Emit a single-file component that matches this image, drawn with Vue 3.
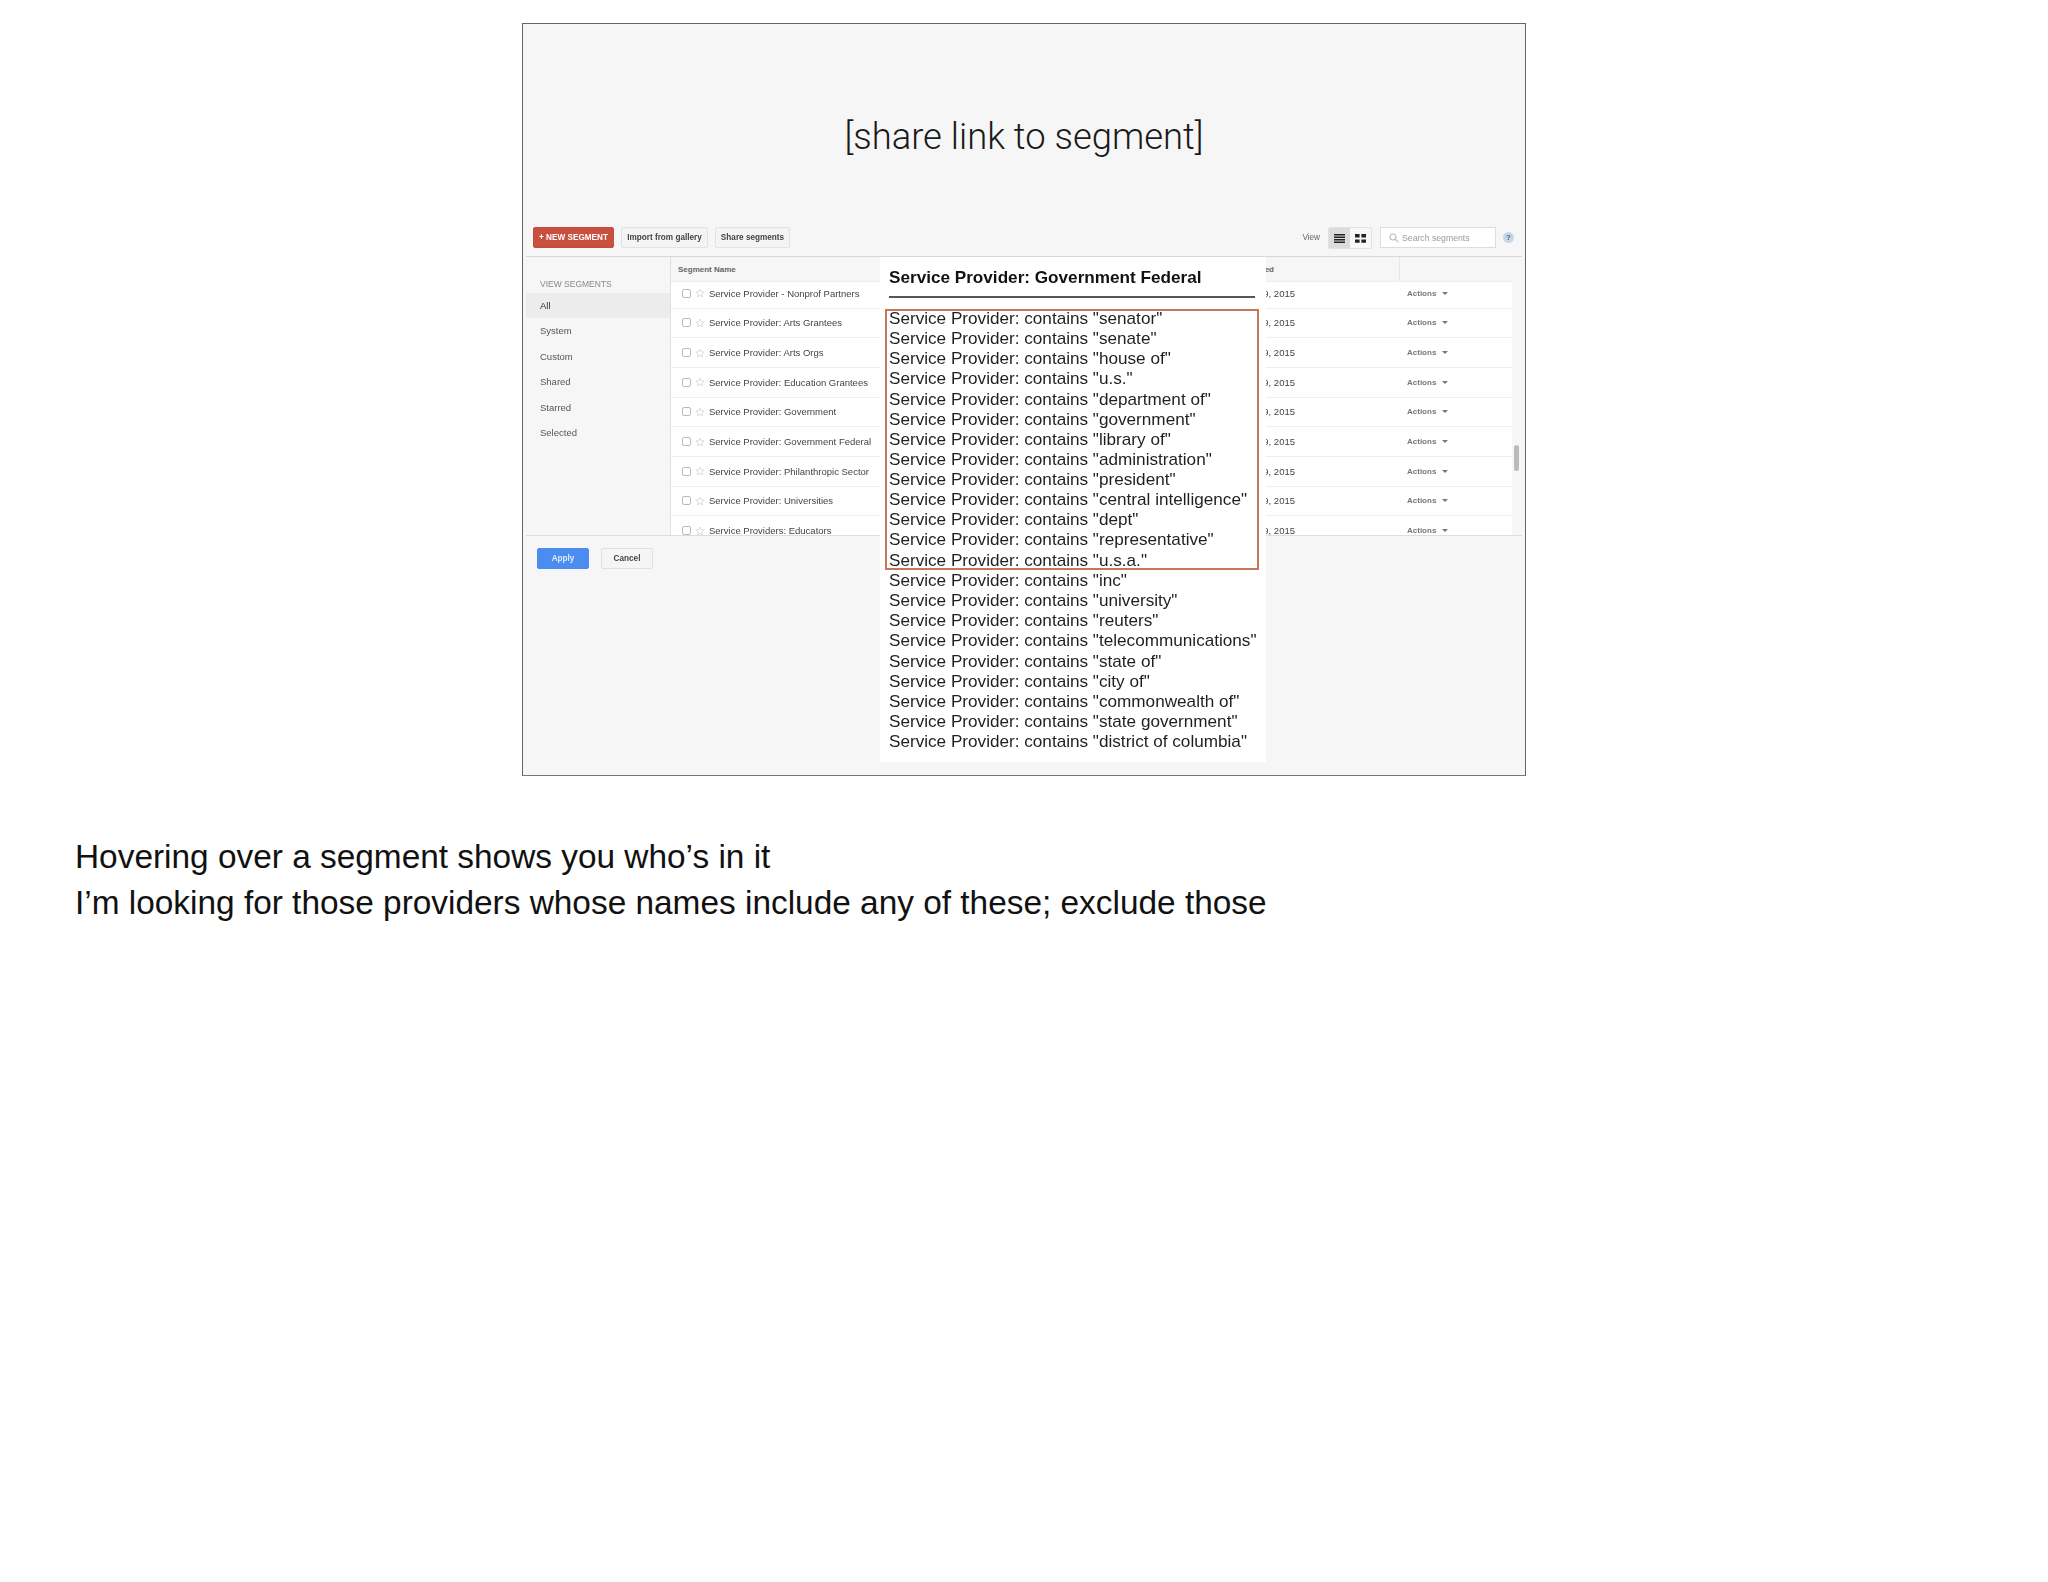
<script setup>
const sideItems = ['All', 'System', 'Custom', 'Shared', 'Starred', 'Selected']

const segments = [
  'Service Provider - Nonprof Partners',
  'Service Provider: Arts Grantees',
  'Service Provider: Arts Orgs',
  'Service Provider: Education Grantees',
  'Service Provider: Government',
  'Service Provider: Government Federal',
  'Service Provider: Philanthropic Sector',
  'Service Provider: Universities',
  'Service Providers: Educators'
]

const boxedTerms = [
  'senator', 'senate', 'house of', 'u.s.', 'department of', 'government', 'library of',
  'administration', 'president', 'central intelligence', 'dept', 'representative', 'u.s.a.'
]

const otherTerms = [
  'inc', 'university', 'reuters', 'telecommunications', 'state of', 'city of',
  'commonwealth of', 'state government', 'district of columbia'
]
</script>

<template>
  <div class="page">
    <div class="slide">
      <h1 class="slide-title">[share link to segment]</h1>

      <div class="shot">
        <div class="toolbar">
          <button class="btn btn-red">+ NEW SEGMENT</button>
          <button class="btn btn-plain">Import from gallery</button>
          <button class="btn btn-plain">Share segments</button>
          <span class="view-label">View</span>
          <div class="view-toggle">
            <span class="toggle-part active">
              <svg width="11" height="9" viewBox="0 0 11 9"><path d="M0 0h11v1.4H0zM0 2.5h11v1.4H0zM0 5h11v1.4H0zM0 7.5h11v1.4H0z" fill="#222" /></svg>
            </span>
            <span class="toggle-part">
              <svg width="11" height="9" viewBox="0 0 11 9"><path d="M0 0h4.6v3.4H0zM6.4 0H11v3.4H6.4zM0 5.4h4.6v3.4H0zM6.4 5.4H11v3.4H6.4z" fill="#222" /></svg>
            </span>
          </div>
          <div class="search">
            <svg width="10" height="10" viewBox="0 0 10 10" fill="none" stroke="#bbb" stroke-width="1.1"><circle cx="4" cy="4" r="3" /><path d="M6.2 6.2 9.4 9.4" /></svg>
            <span>Search segments</span>
          </div>
          <span class="help">?</span>
        </div>

        <div class="body">
          <aside class="sidebar">
            <div class="side-head">VIEW SEGMENTS</div>
            <div v-for="item in sideItems" :key="item" class="side-item" :class="{ selected: item === 'All' }">{{ item }}</div>
          </aside>

          <div class="table">
            <div class="table-head">
              <span class="head-name">Segment Name</span>
              <span class="head-date">Last modified</span>
              <span class="head-actions"></span>
            </div>
            <div class="table-rows">
              <div v-for="name in segments" :key="name" class="row">
                <span class="check"></span>
                <svg class="star" width="10" height="10" viewBox="0 0 24 24" fill="none" stroke="#ccc" stroke-width="1.6"><path d="M12 2.5l2.9 6.3 6.9.8-5.1 4.7 1.4 6.8-6.1-3.4-6.1 3.4 1.4-6.8-5.1-4.7 6.9-.8z" /></svg>
                <span class="row-name">{{ name }}</span>
                <span class="row-date">Nov 9, 2015</span>
                <span class="row-actions">Actions<i class="caret"></i></span>
              </div>
            </div>
          </div>

          <div class="scroll">
            <div class="thumb"></div>
          </div>
        </div>

        <div class="footer">
          <button class="btn btn-blue">Apply</button>
          <button class="btn btn-cancel">Cancel</button>
        </div>
      </div>

      <div class="popup">
        <div class="popup-title">Service Provider: Government Federal</div>
        <div class="popup-box">
          <div v-for="term in boxedTerms" :key="term" class="term">Service Provider: contains "{{ term }}"</div>
        </div>
        <div class="popup-rest">
          <div v-for="term in otherTerms" :key="term" class="term">Service Provider: contains "{{ term }}"</div>
        </div>
      </div>
    </div>

    <div class="notes">
      <p>Hovering over a segment shows you who’s in it</p>
      <p>I’m looking for those providers whose names include any of these; exclude those</p>
    </div>
  </div>
</template>

<style scoped>
.page {
  font-family: "Liberation Sans", Arial, sans-serif;
  color: #111;
  padding-top: 23px;
}

.slide {
  position: relative;
  box-sizing: border-box;
  width: 1004px;
  height: 753px;
  margin-left: 522px;
  background: #f6f6f6;
  border: 1px solid #666;
  border-bottom-color: #777;
  display: flex;
  flex-direction: column;
}

.slide-title {
  height: 203px;
  margin: 0;
  padding-top: 89px;
  box-sizing: border-box;
  text-align: center;
  font-family: Roboto, "Liberation Sans", sans-serif;
  font-weight: 300;
  font-size: 36.4px;
  line-height: 48px;
  color: #1a1a1a;
}

.shot {
  margin: 0 3px;
  filter: blur(0.3px);
}

.toolbar {
  height: 30px;
  box-sizing: border-box;
  padding: 0 0 0 7px;
  display: flex;
  align-items: flex-start;
  gap: 7px;
  border-bottom: 1px solid #d8d8d8;
}

.btn {
  height: 21px;
  padding: 0;
  border-radius: 2px;
  font-family: inherit;
  font-size: 8.2px;
  font-weight: 700;
  border: 1px solid #e2e2e2;
  background: #f4f4f4;
  color: #444;
}

.btn-red {
  width: 81px;
  background: #c9503f;
  border-color: #c24d3c;
  color: #fff;
}

.btn-plain:nth-child(2) {
  width: 87px;
}

.btn-plain:nth-child(3) {
  width: 75px;
}

.view-label {
  margin-left: auto;
  margin-right: 1px;
  font-size: 8.2px;
  line-height: 21px;
  color: #666;
}

.view-toggle {
  display: flex;
  height: 22px;
  width: 44px;
  box-sizing: border-box;
  border: 1px solid #e2e2e2;
  border-radius: 2px;
  background: #f8f8f8;
  margin-right: 1px;
}

.toggle-part {
  flex: 1;
  display: flex;
  align-items: center;
  justify-content: center;
}

.toggle-part.active {
  background: #dcdcdc;
}

.search {
  width: 116px;
  height: 21px;
  box-sizing: border-box;
  padding-left: 8px;
  display: flex;
  align-items: center;
  gap: 3px;
  background: #fff;
  border: 1px solid #ddd;
  font-size: 8.7px;
  color: #999;
}

.help {
  width: 11px;
  height: 11px;
  margin: 5px 8px 0 0;
  border-radius: 50%;
  background: #c9d6e8;
  color: #3f66a8;
  font-size: 8px;
  font-weight: 700;
  line-height: 11px;
  text-align: center;
}

.body {
  display: flex;
  height: 278px;
  overflow: hidden;
}

.sidebar {
  width: 145px;
  flex: none;
  box-sizing: border-box;
  border-right: 1px solid #e0e0e0;
  padding-top: 21px;
}

.side-head {
  height: 15px;
  padding-left: 14px;
  font-size: 8.5px;
  line-height: 12px;
  color: #888;
}

.side-item {
  height: 25.4px;
  padding-left: 14px;
  font-size: 9.5px;
  line-height: 25.4px;
  color: #555;
}

.side-item.selected {
  background: #ececec;
  color: #333;
}

.table {
  flex: 1;
  min-width: 0;
  display: flex;
  flex-direction: column;
}

.table-head {
  position: relative;
  z-index: 1;
  height: 25px;
  flex: none;
  display: grid;
  grid-template-columns: 1fr 200px 113px;
  align-items: center;
  font-size: 8px;
  font-weight: 700;
  color: #666;
  background: #f6f6f6;
  border-bottom: 1px solid #eee;
  box-sizing: border-box;
}

.head-name {
  padding-left: 7px;
}

.head-date {
  text-align: right;
  padding-right: 125px;
}

.head-actions {
  align-self: stretch;
  border-left: 1px solid #e6e6e6;
}

.table-rows {
  margin-top: -3px;
}

.row {
  height: 29.67px;
  box-sizing: border-box;
  display: grid;
  grid-template-columns: 9px 10px 1fr 200px 113px;
  column-gap: 0;
  align-items: center;
  padding-left: 11px;
  background: #fff;
  border-bottom: 1px solid #eee;
  font-size: 9.5px;
  color: #444;
}

.check {
  width: 9px;
  height: 9px;
  box-sizing: border-box;
  border: 1px solid #bbb;
  border-radius: 2px;
  background: #fff;
}

.star {
  margin-left: 4px;
}

.row-name {
  padding-left: 8px;
  white-space: nowrap;
}

.row-date {
  text-align: right;
  padding-right: 104px;
}

.row-actions {
  padding-left: 8px;
  font-size: 8px;
  font-weight: 700;
  color: #777;
}

.caret {
  display: inline-block;
  margin-left: 6px;
  vertical-align: 1px;
  border-left: 3px solid transparent;
  border-right: 3px solid transparent;
  border-top: 3px solid #777;
}

.scroll {
  width: 10px;
  flex: none;
  position: relative;
  padding-top: 25px;
}

.thumb {
  width: 5px;
  height: 26px;
  margin: 163px 0 0 2px;
  background: #bbb;
  border-radius: 3px;
}

.footer {
  height: 60px;
  padding: 12px 0 0 11px;
  display: flex;
  gap: 12px;
  border-top: 1px solid #ddd;
}

.btn-blue {
  width: 52px;
  background: #4a8cf0;
  border-color: #4a8cf0;
  color: #dfeaff;
}

.btn-cancel {
  width: 52px;
  background: #f5f5f5;
  border-color: #e0e0e0;
  color: #444;
}

.popup {
  position: absolute;
  left: 357px;
  top: 233px;
  width: 386px;
  height: 505px;
  box-sizing: border-box;
  background: #fff;
  padding: 0 0 0 9px;
  color: #1f1f1f;
  filter: blur(0.3px);
}

.popup-title {
  width: 366px;
  height: 41px;
  box-sizing: border-box;
  border-bottom: 2px solid #555;
  font-size: 17.15px;
  font-weight: 700;
  line-height: 41px;
  color: #111;
}

.popup-box {
  width: 374px;
  margin: 11px 0 0 -4px;
  padding-left: 2px;
  height: 261px;
  box-sizing: border-box;
  border: 2px solid #c8755a;
}

.popup-box .term:first-child {
  margin-top: -3px;
}

.term {
  height: 20.13px;
  line-height: 20.13px;
  font-size: 17.15px;
  white-space: nowrap;
}

.notes {
  margin: 58px 0 0 75px;
  font-size: 33.4px;
  line-height: 46px;
  color: #111;
}

.notes p {
  margin: 0;
}
</style>

<style>
body {
  background: #fff;
}
</style>
